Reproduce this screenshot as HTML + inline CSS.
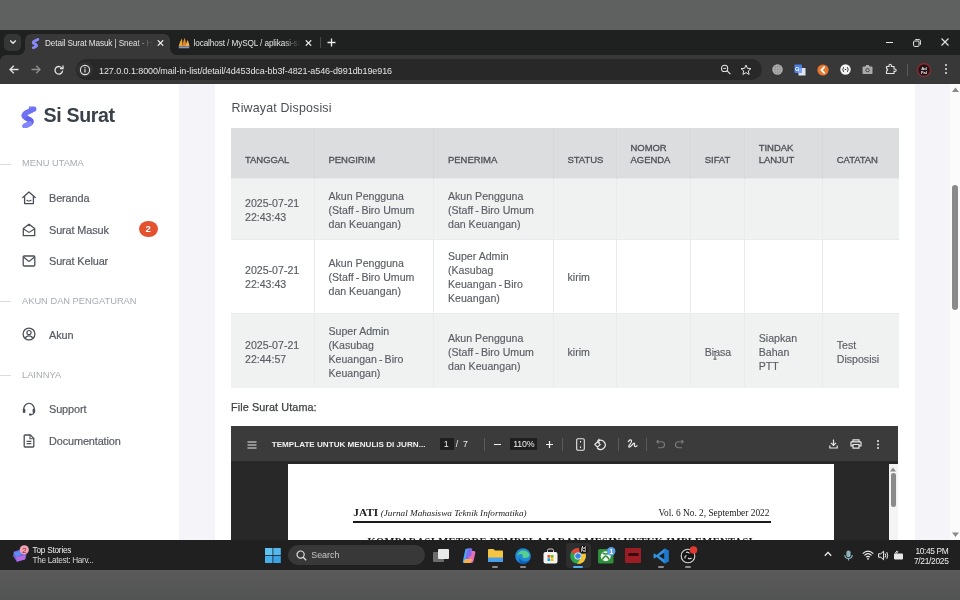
<!DOCTYPE html>
<html><head><meta charset="utf-8">
<style>
*{box-sizing:border-box;margin:0;padding:0}
html,body{width:960px;height:600px;overflow:hidden;background:#5f6060;font-family:"Liberation Sans",sans-serif}
body{will-change:transform}
.abs{position:absolute}
#topgray{left:0;top:0;width:960px;height:30px;background:#5f6060}
#tabstrip{left:0;top:30px;width:960px;height:25px;background:#1f2020}
#toolbar{left:0;top:55px;width:960px;height:29px;background:#383838}
#page{left:0;top:84px;width:960px;height:456px;background:#f5f5f9;overflow:hidden}
#taskbar{left:0;top:540px;width:960px;height:29.5px;background:#202020}
#botgray{left:0;top:569.5px;width:960px;height:30.5px;background:linear-gradient(#5a5b5a,#525453)}
#sidebar{left:0;top:0;width:179px;height:456px;background:#fff}
#card{left:214.5px;top:-20px;width:700.5px;height:500px;background:#fff}
.menuhdr{position:absolute;left:22px;font-size:9.3px;color:#a7acb2}
.menuline{position:absolute;left:0;width:11px;height:1px;background:#d9dbde}
.mi{position:absolute;left:49px;font-size:10.9px;letter-spacing:-.12px;color:#575c63;-webkit-text-stroke:.2px #575c63}
.ic{position:absolute;left:22px}
table{border-collapse:collapse;position:absolute;left:16.5px;top:64px;width:667.5px;table-layout:fixed}
th{background:#dcdddf;font-size:9.5px;color:#4d5157;text-align:left;font-weight:normal;letter-spacing:-.05px;-webkit-text-stroke:.3px #4d5157;padding:0 0 12.5px 14px;height:50.5px;line-height:12px;vertical-align:bottom;border-right:1px solid #d6d8da}
td{font-size:10.6px;color:#5a5e64;-webkit-text-stroke:.15px #5a5e64;line-height:14px;padding:1.5px 0 0 14px;border-right:1px solid #eaebec;border-top:1px solid #e9eaeb}
tr.odd td{background:#f0f1f1}
.tabt{font-size:8.2px;letter-spacing:-.1px;color:#e3e3e3;white-space:nowrap;overflow:hidden;-webkit-mask-image:linear-gradient(90deg,#000 85%,transparent)}
th:last-child,td:last-child{border-right:none}
</style></head><body>
<div id="topgray" class="abs"></div>
<div id="tabstrip" class="abs">
  <div class="abs" style="left:4px;top:4px;width:17px;height:17px;border-radius:5px;background:#353636"></div>
  <svg class="abs" style="left:9px;top:9px" width="8" height="6" viewBox="0 0 8 6"><path d="M1.2 1.5 L4 4.3 L6.8 1.5" stroke="#e8e8e8" stroke-width="1.4" fill="none"/></svg>
  <div class="abs" style="left:25px;top:4.2px;width:144.8px;height:22px;border-radius:6px 6px 0 0;background:#383838"></div>
  <div class="abs" style="left:19px;top:19px;width:6px;height:6px;background:radial-gradient(circle at 0 0,transparent 5.5px,#383838 6px)"></div>
  <div class="abs" style="left:169.8px;top:19px;width:6px;height:6px;background:radial-gradient(circle at 100% 0,transparent 5.5px,#383838 6px)"></div>
  <svg class="abs" style="left:31px;top:7.5px" width="9" height="11" viewBox="0 0 9 11"><path d="M6.8 1.4 L3.4 3.2 Q1.2 4.6 3 5.6 L5 6.6 Q6.5 7.6 4.8 8.6 L2.4 9.8" stroke="#8688f6" stroke-width="2.8" fill="none" stroke-linecap="round" stroke-linejoin="round"/></svg>
  <div class="abs tabt" style="left:45px;top:8.5px;width:107px">Detail Surat Masuk | Sneat - HTML</div>
  <svg class="abs" style="left:156.5px;top:9.8px" width="7" height="6" viewBox="0 0 7 6"><path d="M0.8 0.3 L6.2 5.7 M6.2 0.3 L0.8 5.7" stroke="#ececec" stroke-width="1.2"/></svg>
  <svg class="abs" style="left:177.5px;top:6.5px" width="12" height="12" viewBox="0 0 12 12"><path d="M0.8 9 Q2 4 4 1.5 L4.6 9 Z" fill="#f0a53a"/><path d="M4.2 9 Q5.2 3.5 6.8 0.8 Q7.8 4 8.2 9 Z" fill="#e08a2a"/><path d="M7.6 9 Q8.6 5 9.6 3 Q11 6 11.4 9 Z" fill="#f3b556"/><path d="M0.5 9.2 H11.6 L11 11.2 H1 Z" fill="#8f97b0"/></svg>
  <div class="abs tabt" style="left:193.5px;top:8.5px;width:106px">localhost / MySQL / aplikasi-surat</div>
  <svg class="abs" style="left:305px;top:9.8px" width="7" height="6" viewBox="0 0 7 6"><path d="M0.8 0.3 L6.2 5.7 M6.2 0.3 L0.8 5.7" stroke="#ececec" stroke-width="1.2"/></svg>
  <div class="abs" style="left:320px;top:7px;width:1px;height:11px;background:#4a4a4a"></div>
  <svg class="abs" style="left:327px;top:8px" width="9" height="9" viewBox="0 0 9 9"><path d="M4.5 0.5 V8.5 M0.5 4.5 H8.5" stroke="#ececec" stroke-width="1.3"/></svg>
  <div class="abs" style="left:885.5px;top:12px;width:7.5px;height:1px;background:#e6e6e6"></div>
  <svg class="abs" style="left:912.5px;top:8.5px" width="8" height="8" viewBox="0 0 8 8"><rect x="0.6" y="2" width="5.4" height="5.4" rx="1" stroke="#e6e6e6" stroke-width="1" fill="none"/><path d="M2.2 0.6 H6.2 Q7.4 0.6 7.4 1.8 V5.8" stroke="#e6e6e6" stroke-width="1" fill="none"/></svg>
  <svg class="abs" style="left:941px;top:8px" width="8" height="8" viewBox="0 0 8 8"><path d="M0.5 0.5 L7.5 7.5 M7.5 0.5 L0.5 7.5" stroke="#e6e6e6" stroke-width="1.1"/></svg>
</div>
<div id="toolbar" class="abs">
  <div class="abs" style="left:0;top:0;width:6px;height:6px;background:radial-gradient(circle at 100% 100%,transparent 5.5px,#1f2020 6px)"></div>
  <svg class="abs" style="left:9px;top:10px" width="10" height="9" viewBox="0 0 10 9"><path d="M9.5 4.5 H1 M4.8 0.7 L1 4.5 L4.8 8.3" stroke="#e3e3e3" stroke-width="1.3" fill="none"/></svg>
  <svg class="abs" style="left:31px;top:10px" width="10" height="9" viewBox="0 0 10 9"><path d="M0.5 4.5 H9 M5.2 0.7 L9 4.5 L5.2 8.3" stroke="#8f8f8f" stroke-width="1.3" fill="none"/></svg>
  <svg class="abs" style="left:54px;top:9.5px" width="10" height="10" viewBox="0 0 10 10"><path d="M8.3 3.8 A3.8 3.8 0 1 0 8.6 5.6" stroke="#e3e3e3" stroke-width="1.3" fill="none"/><path d="M6 3.6 H9 V0.6" stroke="#e3e3e3" stroke-width="1.3" fill="none"/></svg>
  <div class="abs" style="left:75.5px;top:4px;width:686px;height:21px;border-radius:10.5px;background:#282828"></div>
  <div class="abs" style="left:77px;top:6.5px;width:15.5px;height:15.5px;border-radius:50%;background:#323232"></div>
  <svg class="abs" style="left:79px;top:8.5px" width="12" height="12" viewBox="0 0 12 12"><circle cx="6" cy="6" r="4.6" stroke="#e3e3e3" stroke-width="1.1" fill="none"/><path d="M6 5.2 V8.6" stroke="#e3e3e3" stroke-width="1.2"/><circle cx="6" cy="3.7" r="0.7" fill="#e3e3e3"/></svg>
  <div class="abs" id="url" style="left:99px;top:10.5px;font-size:9px;letter-spacing:-.08px;color:#e3e3e3;white-space:nowrap">127.0.0.1:8000/mail-in-list/detail/4d453dca-bb3f-4821-a546-d991db19e916</div>
  <svg class="abs" style="left:720px;top:8.5px" width="12" height="12" viewBox="0 0 12 12"><circle cx="4.6" cy="4.4" r="3.1" stroke="#e3e3e3" stroke-width="1.1" fill="none"/><path d="M6.9 6.7 L10.4 10.2" stroke="#e3e3e3" stroke-width="1.2"/><path d="M3.2 4.4 H6" stroke="#e3e3e3" stroke-width="1"/></svg>
  <svg class="abs" style="left:740px;top:8.5px" width="12" height="12" viewBox="0 0 12 12"><path d="M6 1 L7.4 4.3 L11 4.6 L8.3 6.9 L9.1 10.5 L6 8.6 L2.9 10.5 L3.7 6.9 L1 4.6 L4.6 4.3 Z" stroke="#e3e3e3" stroke-width="1" fill="none" stroke-linejoin="round"/></svg>
  <svg class="abs" style="left:772px;top:9px" width="11" height="11" viewBox="0 0 11 11"><circle cx="5.5" cy="5.5" r="5.2" fill="#b4b4b4"/><path d="M0.6 5.5 H10.4 M1.4 3 H9.6 M1.4 8 H9.6 M5.5 0.3 V10.7" stroke="#8c8c8c" stroke-width=".6"/><ellipse cx="5.5" cy="5.5" rx="2.4" ry="5.2" stroke="#8c8c8c" stroke-width=".6" fill="none"/></svg>
  <svg class="abs" style="left:794px;top:8.5px" width="12" height="12" viewBox="0 0 12 12"><rect x="0.5" y="0.5" width="7.5" height="8.5" rx="0.8" fill="#4a7fe6"/><path d="M4.5 4 H11.5 V11.5 H4.5 Z" fill="#dfe6f3"/><path d="M4.5 4 H8 V9 H4.5 Z" fill="#7ea3ee"/><text x="3.2" y="6.6" font-size="5.5" font-weight="bold" fill="#fff" font-family="Liberation Sans" text-anchor="middle">G</text></svg>
  <svg class="abs" style="left:817px;top:8.5px" width="12" height="12" viewBox="0 0 12 12"><circle cx="6" cy="6" r="5.6" fill="#e8772e"/><path d="M7.2 3.2 L4.4 6 L7.2 8.8" stroke="#fff" stroke-width="1.8" fill="none" stroke-linecap="round"/></svg>
  <svg class="abs" style="left:840px;top:9px" width="11" height="11" viewBox="0 0 11 11"><circle cx="5.5" cy="5.5" r="5.2" fill="#f4f4f4"/><path d="M3.6 3.2 Q2 5.5 3.6 7.8 M7.4 3.2 Q9 5.5 7.4 7.8" stroke="#333" stroke-width="1" fill="none"/><path d="M4.8 5.5 H6.2" stroke="#333" stroke-width="1"/></svg>
  <svg class="abs" style="left:862px;top:9px" width="11" height="11" viewBox="0 0 11 11"><path d="M0.5 3.5 Q0.5 2.5 1.5 2.5 H3.2 L4.2 1 H6.8 L7.8 2.5 H9.5 Q10.5 2.5 10.5 3.5 V9.2 Q10.5 10 9.5 10 H1.5 Q0.5 10 0.5 9.2 Z" fill="#aaaaaa"/><circle cx="5.5" cy="6.2" r="2" fill="#383838"/><circle cx="5.5" cy="6.2" r="1.2" fill="#aaaaaa"/></svg>
  <svg class="abs" style="left:885px;top:8px" width="12" height="12" viewBox="0 0 12 12"><path d="M1.5 3.5 H4 V2.5 A1.2 1.2 0 0 1 6.4 2.5 V3.5 H9 V6 H10 A1.2 1.2 0 0 1 10 8.4 H9 V10.5 H1.5 V8 A1.2 1.2 0 0 0 1.5 5.6 Z" stroke="#e3e3e3" stroke-width="1.1" fill="none"/></svg>
  <div class="abs" style="left:906.5px;top:8.5px;width:1px;height:12px;background:#5a5a5a"></div>
  <svg class="abs" style="left:917px;top:7.5px" width="14" height="14" viewBox="0 0 14 14"><circle cx="7" cy="7" r="6.4" fill="#241416" stroke="#a02a33" stroke-width="1.1"/><text x="7" y="6.6" font-size="4.2" font-weight="bold" fill="#f0f0f0" font-family="Liberation Sans" text-anchor="middle">Ad</text><text x="7" y="10.6" font-size="4.2" font-weight="bold" fill="#f0f0f0" font-family="Liberation Sans" text-anchor="middle">Fal</text></svg>
  <div class="abs" style="left:945px;top:9px;width:2.2px;height:2.2px;border-radius:50%;background:#e3e3e3;box-shadow:0 4px 0 #e3e3e3,0 8px 0 #e3e3e3"></div>
</div>
<div id="page" class="abs">
  <div id="sidebar" class="abs">
    <svg class="abs" style="left:21px;top:21px" width="17" height="23" viewBox="0 0 17 23"><path d="M8.2 1.2 L15.2 2 L11.6 7.6 L7 9.2 Z" fill="#8385fb"/><path d="M12.8 4.2 L5.6 7.6 Q0.8 10.2 4.6 12.6 L8.8 14.8 Q11.6 16.6 8.6 18.6 L4 21" stroke="#7072f6" stroke-width="5.2" fill="none" stroke-linecap="round" stroke-linejoin="round"/><path d="M4.6 12.6 L8.8 14.8 Q11.6 16.6 8.6 18.6" stroke="#6063ec" stroke-width="5" fill="none"/><path d="M8.6 18.6 L4 21" stroke="#8385fb" stroke-width="5" fill="none" stroke-linecap="round"/></svg>
    <div class="abs" style="left:43.5px;top:19.5px;font-size:19.6px;font-weight:bold;color:#3a4049;letter-spacing:-.35px">Si Surat</div>
    <div class="menuline" style="top:79.5px"></div><div class="menuhdr" style="top:74px">MENU UTAMA</div>
    <svg class="ic" style="top:107px" width="14" height="14" viewBox="0 0 14 14"><path d="M0.8 6.6 L7 1 L13.2 6.6" stroke="#4b5058" stroke-width="1.3" fill="none" stroke-linejoin="round" stroke-linecap="round"/><path d="M2.6 5.2 V12.6 H11.4 V5.2" stroke="#4b5058" stroke-width="1.3" fill="none" stroke-linejoin="round"/><path d="M4.6 9 Q7 11 9.4 9" stroke="#4b5058" stroke-width="1.2" fill="none"/></svg>
    <div class="mi" style="top:108px">Beranda</div>
    <svg class="ic" style="top:138.5px" width="14" height="14" viewBox="0 0 14 14"><path d="M1.3 5.6 L7 1.2 L12.7 5.6 V12.7 H1.3 Z" stroke="#4b5058" stroke-width="1.3" fill="none" stroke-linejoin="round"/><path d="M1.6 5.9 L7 9.4 L12.4 5.9" stroke="#4b5058" stroke-width="1.2" fill="none"/></svg>
    <div class="mi" style="top:140px">Surat Masuk</div>
    <div class="abs" style="left:138.75px;top:137px;width:18.75px;height:16.25px;border-radius:50%;background:#e4512e;color:#fff;font-size:9.5px;font-weight:bold;text-align:center;line-height:16.5px">2</div>
    <svg class="ic" style="top:170.5px" width="14" height="12" viewBox="0 0 14 12"><rect x="1.2" y="1" width="11.6" height="10" rx="1" stroke="#4b5058" stroke-width="1.3" fill="none"/><path d="M1.8 2.2 L7 6.4 L12.2 2.2" stroke="#4b5058" stroke-width="1.2" fill="none"/></svg>
    <div class="mi" style="top:170.5px">Surat Keluar</div>
    <div class="menuline" style="top:217px"></div><div class="menuhdr" style="top:211.5px">AKUN DAN PENGATURAN</div>
    <svg class="ic" style="top:243px" width="14" height="14" viewBox="0 0 14 14"><circle cx="7" cy="7" r="5.9" stroke="#4b5058" stroke-width="1.3" fill="none"/><circle cx="7" cy="5.6" r="2.1" stroke="#4b5058" stroke-width="1.2" fill="none"/><path d="M3.4 11.3 Q4 8.9 7 8.9 Q10 8.9 10.6 11.3" stroke="#4b5058" stroke-width="1.2" fill="none"/></svg>
    <div class="mi" style="top:245px">Akun</div>
    <div class="menuline" style="top:291px"></div><div class="menuhdr" style="top:285.5px">LAINNYA</div>
    <svg class="ic" style="top:318px" width="14" height="14" viewBox="0 0 14 14"><path d="M1.8 8.4 V6.6 A5.2 5.2 0 0 1 12.2 6.6 V8.4" stroke="#4b5058" stroke-width="1.3" fill="none"/><rect x="0.8" y="6.8" width="2.6" height="4.2" rx="1" fill="#4b5058"/><rect x="10.6" y="6.8" width="2.6" height="4.2" rx="1" fill="#4b5058"/><path d="M12 10.6 Q11.6 12.6 8.6 12.6" stroke="#4b5058" stroke-width="1.2" fill="none"/><rect x="7" y="11.6" width="2.4" height="1.9" rx=".6" fill="#4b5058"/></svg>
    <div class="mi" style="top:319px">Support</div>
    <svg class="ic" style="top:349.5px;left:23px" width="12" height="14" viewBox="0 0 12 14"><path d="M1.2 1.8 Q1.2 1 2 1 H7.4 L10.8 4.4 V12.2 Q10.8 13 10 13 H2 Q1.2 13 1.2 12.2 Z" stroke="#4b5058" stroke-width="1.3" fill="none" stroke-linejoin="round"/><path d="M7 1.2 V4.8 H10.6 M3.6 7.4 H8.4 M3.6 9.6 H8.4" stroke="#4b5058" stroke-width="1.1" fill="none"/></svg>
    <div class="mi" style="top:350.5px">Documentation</div>
  </div>
  <div class="abs" style="left:950px;top:0;width:10px;height:456px;background:#fbfbfb"></div>
  <svg class="abs" style="left:952px;top:3px" width="7" height="6" viewBox="0 0 7 6"><path d="M0 5 L3.5 0.5 L7 5 Z" fill="#8a8a8a"/></svg>
  <div class="abs" style="left:952px;top:100.5px;width:6px;height:125.5px;border-radius:3px;background:#8a8a8a"></div>
  <svg class="abs" style="left:952px;top:448px" width="7" height="6" viewBox="0 0 7 6"><path d="M0 0.5 L3.5 5 L7 0.5 Z" fill="#8a8a8a"/></svg>
  <div id="card" class="abs">
    <div class="abs" style="left:17px;top:37px;font-size:12.4px;color:#4a4e54;letter-spacing:.18px">Riwayat Disposisi</div>
    <table>
      <colgroup><col style="width:83px"><col style="width:119.5px"><col style="width:119.5px"><col style="width:63px"><col style="width:74.25px"><col style="width:54px"><col style="width:78px"><col></colgroup>
      <tr><th>TANGGAL</th><th>PENGIRIM</th><th>PENERIMA</th><th>STATUS</th><th>NOMOR<br>AGENDA</th><th>SIFAT</th><th>TINDAK<br>LANJUT</th><th>CATATAN</th></tr>
      <tr class="odd" style="height:60.75px"><td>2025-07-21<br>22:43:43</td><td>Akun Pengguna<br>(Staff&#8201;-&#8201;Biro Umum<br>dan Keuangan)</td><td>Akun Pengguna<br>(Staff&#8201;-&#8201;Biro Umum<br>dan Keuangan)</td><td></td><td></td><td></td><td></td><td></td></tr>
      <tr style="height:74.5px"><td>2025-07-21<br>22:43:43</td><td>Akun Pengguna<br>(Staff&#8201;-&#8201;Biro Umum<br>dan Keuangan)</td><td>Super Admin<br>(Kasubag<br>Keuangan&#8201;-&#8201;Biro<br>Keuangan)</td><td>kirim</td><td></td><td></td><td></td><td></td></tr>
      <tr class="odd" style="height:74.5px"><td>2025-07-21<br>22:44:57</td><td>Super Admin<br>(Kasubag<br>Keuangan&#8201;-&#8201;Biro<br>Keuangan)</td><td>Akun Pengguna<br>(Staff&#8201;-&#8201;Biro Umum<br>dan Keuangan)</td><td>kirim</td><td></td><td>Biasa</td><td>Siapkan<br>Bahan<br>PTT</td><td>Test<br>Disposisi</td></tr>
    </table>
    <div class="abs" style="left:16.5px;top:337px;font-size:10.8px;color:#3f4348;font-weight:normal;letter-spacing:.1px;-webkit-text-stroke:.25px #3f4348">File Surat Utama:</div>
    <div id="pdf" class="abs" style="left:16.75px;top:362.25px;width:666.75px;height:200px;background:#282828">
      <div class="abs" style="left:0;top:0;width:666.75px;height:35px;background:#3b3b3b"></div>
      <svg class="abs" style="left:15.75px;top:15px" width="10" height="8" viewBox="0 0 10 8"><path d="M0.5 1 H9.5 M0.5 4 H9.5 M0.5 7 H9.5" stroke="#e8e8e8" stroke-width="1.1"/></svg>
      <div class="abs" style="left:40.5px;top:12.5px;font-size:8.1px;font-weight:bold;color:#f0f0f0;white-space:nowrap;line-height:11px">TEMPLATE UNTUK MENULIS DI JURN...</div>
      <div class="abs" style="left:208.75px;top:11.25px;width:13.75px;height:12.5px;background:#1e1e1e"></div>
      <div class="abs" style="left:212.5px;top:12.5px;font-size:8.8px;color:#f0f0f0;line-height:11px">1</div>
      <div class="abs" style="left:224.5px;top:12.5px;font-size:8.8px;color:#f0f0f0;line-height:11px">/&nbsp; 7</div>
      <div class="abs" style="left:253px;top:11.75px;width:1px;height:13px;background:#5a5a5a"></div>
      <div class="abs" style="left:262.5px;top:17.75px;width:6.75px;height:1.2px;background:#f0f0f0"></div>
      <div class="abs" style="left:278.25px;top:11.25px;width:27.5px;height:12.5px;background:#1e1e1e"></div>
      <div class="abs" style="left:282px;top:12.5px;font-size:8.8px;color:#f0f0f0;line-height:11px;letter-spacing:-.2px">110%</div>
      <svg class="abs" style="left:314.5px;top:14.5px" width="7" height="7" viewBox="0 0 7 7"><path d="M3.5 0 V7 M0 3.5 H7" stroke="#f0f0f0" stroke-width="1.2"/></svg>
      <div class="abs" style="left:331px;top:11.75px;width:1px;height:13px;background:#5a5a5a"></div>
      <svg class="abs" style="left:344.5px;top:11.75px" width="9" height="13" viewBox="0 0 9 13"><rect x="0.7" y="0.7" width="7.6" height="11.6" rx="1.2" stroke="#e8e8e8" stroke-width="1.1" fill="none"/><path d="M4.5 3 V4.6 M4.5 8.4 V10" stroke="#e8e8e8" stroke-width="1.1"/></svg>
      <svg class="abs" style="left:362.5px;top:11.75px" width="13" height="13" viewBox="0 0 13 13"><path d="M4.5 2.8 A4.6 4.6 0 1 1 3.2 10" stroke="#e8e8e8" stroke-width="1.2" fill="none"/><path d="M5.5 0.8 L3.8 2.8 L5.8 4.6" stroke="#e8e8e8" stroke-width="1.1" fill="none"/><path d="M0.8 6.5 L3.5 3.8 L6.2 6.5 L3.5 9.2 Z" stroke="#e8e8e8" stroke-width="1.1" fill="none"/></svg>
      <div class="abs" style="left:386.75px;top:11.75px;width:1px;height:13px;background:#5a5a5a"></div>
      <svg class="abs" style="left:395.5px;top:12px" width="11" height="12" viewBox="0 0 11 12"><path d="M1 4 Q3.5 0.5 4.5 2.5 Q5 4 2 7.5 Q1 9.5 3 9 L6.5 5.5 Q8 4.5 7.5 7 Q7 9 9 8.5 L10.5 7.5" stroke="#e8e8e8" stroke-width="1.2" fill="none"/></svg>
      <div class="abs" style="left:415px;top:11.75px;width:1px;height:13px;background:#5a5a5a"></div>
      <svg class="abs" style="left:424.5px;top:13px" width="9" height="10" viewBox="0 0 9 10"><path d="M2.5 1 L0.8 2.8 L2.5 4.6 M1 2.8 H5.5 A3 3 0 0 1 5.5 8.8 H2" stroke="#7a7a7a" stroke-width="1.1" fill="none"/></svg>
      <svg class="abs" style="left:443.75px;top:13px" width="9" height="10" viewBox="0 0 9 10"><path d="M6.5 1 L8.2 2.8 L6.5 4.6 M8 2.8 H3.5 A3 3 0 0 0 3.5 8.8 H7" stroke="#7a7a7a" stroke-width="1.1" fill="none"/></svg>
      <svg class="abs" style="left:597.5px;top:13px" width="9" height="10" viewBox="0 0 9 10"><path d="M4.5 0.5 V6 M2 3.8 L4.5 6.3 L7 3.8 M0.8 6.5 V9 H8.2 V6.5" stroke="#e8e8e8" stroke-width="1.2" fill="none"/></svg>
      <svg class="abs" style="left:618.75px;top:13px" width="12" height="10" viewBox="0 0 12 10"><path d="M3 3 V0.8 H9 V3 M3 6.8 H1 V3.4 Q1 2.8 1.6 2.8 H10.4 Q11 2.8 11 3.4 V6.8 H9 M3 5.5 H9 V9.2 H3 Z" stroke="#e8e8e8" stroke-width="1.2" fill="none"/></svg>
      <div class="abs" style="left:645.75px;top:13.5px;width:2px;height:2px;border-radius:50%;background:#e8e8e8;box-shadow:0 3.5px 0 #e8e8e8,0 7px 0 #e8e8e8"></div>
      <div class="abs" style="left:56.25px;top:37.5px;width:546.25px;height:200px;background:#fff">
        <div class="abs" style="left:65.75px;top:40px;font-family:'Liberation Serif',serif;color:#1a1a1a;white-space:nowrap;line-height:14px"><b style="font-size:11.3px">JATI</b><i style="margin-left:2.5px"></i><i style="font-size:9.2px">(Jurnal Mahasiswa Teknik Informatika)</i></div>
        <div class="abs" style="left:371px;top:42px;font-family:'Liberation Serif',serif;color:#1a1a1a;white-space:nowrap;font-size:9.35px;line-height:14px">Vol. 6 No. 2, September 2022</div>
        <div class="abs" style="left:65.75px;top:57.5px;width:418px;height:1.3px;background:#1a1a1a"></div>
        <div class="abs" style="left:80px;top:71.5px;font-family:'Liberation Serif',serif;color:#1a1a1a;white-space:nowrap;font-size:10.5px;font-weight:bold;line-height:14px;letter-spacing:.35px">KOMPARASI METODE PEMBELAJARAN MESIN UNTUK IMPLEMENTASI</div>
      </div>
      <div class="abs" style="left:657.25px;top:37.5px;width:9.5px;height:200px;background:#f4f4f4"></div>
      <svg class="abs" style="left:659px;top:40.5px" width="6" height="5" viewBox="0 0 6 5"><path d="M0 4.5 L3 0.5 L6 4.5 Z" fill="#8a8a8a"/></svg>
      <div class="abs" style="left:659.75px;top:47px;width:4.5px;height:34px;border-radius:2.25px;background:#8a8a8a"></div>
    </div>
  </div>
  </div>
</div>
<svg class="abs" style="left:712px;top:350px" width="6" height="11" viewBox="0 0 6 11"><path d="M1.2 1.2 H4.8 M3 1.2 V9.4 M1.2 9.4 H4.8" stroke="#fff" stroke-width="2.2" opacity=".8"/><path d="M1.4 1.4 H4.6 M3 1.4 V9.2 M1.4 9.2 H4.6" stroke="#505050" stroke-width="1"/></svg>
<div id="taskbar" class="abs">
  <svg class="abs" style="left:12px;top:4.5px" width="17" height="18" viewBox="0 0 17 18"><path d="M2 6.5 L10 4 L14.5 9.5 L13.5 14 L5 17 L1 11 Z" fill="#7a5ad8"/><path d="M1.5 7.5 L9 5.5 L11 9 L4 12 Z" fill="#5b8ef0"/><path d="M4 12 L13.5 10 L13 14.5 L5 16.5 Z" fill="#b36be0"/><circle cx="12.3" cy="4.8" r="4.6" fill="#f2a3b3"/><text x="12.3" y="7.6" font-size="7.5" text-anchor="middle" fill="#7a2030" font-family="Liberation Sans">2</text></svg>
  <div class="abs" style="left:32.5px;top:5.5px;font-size:8.2px;letter-spacing:-.2px;color:#f0f0f0;line-height:10px;white-space:nowrap">Top Stories</div>
  <div class="abs" style="left:32.5px;top:15.5px;font-size:8.2px;letter-spacing:-.3px;color:#d8d8d8;line-height:10px;white-space:nowrap">The Latest: Harv...</div>
  <svg class="abs" style="left:264.5px;top:8px" width="16" height="15" viewBox="0 0 16 15"><rect x="0" y="0" width="7.5" height="7" fill="#5fc4f4"/><rect x="8.3" y="0" width="7.5" height="7" fill="#52b8ee"/><rect x="0" y="7.8" width="7.5" height="7.2" fill="#46aeea"/><rect x="8.3" y="7.8" width="7.5" height="7.2" fill="#3aa2e4"/></svg>
  <div class="abs" style="left:288px;top:5px;width:137px;height:20px;border-radius:10px;background:#383838"></div>
  <svg class="abs" style="left:295.5px;top:9.5px" width="11" height="11" viewBox="0 0 11 11"><circle cx="4.6" cy="4.6" r="3.6" stroke="#e0e0e0" stroke-width="1.2" fill="none"/><path d="M7.2 7.2 L10.2 10.2" stroke="#e0e0e0" stroke-width="1.3"/></svg>
  <div class="abs" style="left:311.25px;top:10px;font-size:8.9px;color:#cacaca;line-height:11px">Search</div>
  <div class="abs" style="left:432.5px;top:12px;width:11px;height:10px;background:#6b6b6b;border-radius:1px"></div>
  <div class="abs" style="left:437.5px;top:8.5px;width:11px;height:10px;background:#e8e8e8;border-radius:1px"></div>
  <svg class="abs" style="left:459.5px;top:7.5px" width="17" height="16" viewBox="0 0 17 16"><path d="M5.5 1 Q6.5 0.3 8 0.5 H11 Q12.5 0.5 12.2 2 L10 12 Q9.5 14.5 7 15 H4 Q2.5 15 2.8 13.5 L5 3 Z" fill="#4aa8f0"/><path d="M8 0.5 H11 Q12.5 0.5 12.2 2 L10.5 9 Q10 11 8 11 H5.5 L7 3 Q7.3 0.8 8 0.5 Z" fill="#7e6cf2"/><path d="M11.5 3 H14 Q15.8 3 15.3 5 L13.5 13 Q13 15 11 15 H7 L8.5 10 Q9 8 11 8 Z" fill="#e86fb8"/><path d="M4 15 H9 Q11 15 11.5 13 L12 11 H6.5 Q4.5 11 4 13 Z" fill="#f6b24a"/></svg>
  <svg class="abs" style="left:488px;top:8px" width="15" height="15" viewBox="0 0 15 15"><path d="M0 2 Q0 1 1 1 H5.5 L7 2.5 H14 Q15 2.5 15 3.5 V13 Q15 14 14 14 H1 Q0 14 0 13 Z" fill="#f5c542"/><rect x="0" y="9.5" width="15" height="4.5" fill="#4a9de8"/></svg>
  <div class="abs" style="left:491.5px;top:26px;width:6px;height:1.5px;border-radius:1px;background:#8a8a8a"></div>
  <svg class="abs" style="left:515px;top:7.5px" width="16" height="16" viewBox="0 0 16 16"><circle cx="8" cy="8" r="7.8" fill="#1f8ad8"/><path d="M2 9 Q2.5 3 8 2.5 Q13.5 2.5 14.5 7 Q14 10 10 10 Q7 10 7.5 8 Q8.5 6 5 6 Q2.5 6.5 2 9 Z" fill="#56d08a"/><path d="M6 15.5 Q3 13 4.5 10 Q6 13 10 13.5 Q13 13.5 15 11 Q13 15.5 8 15.8 Z" fill="#0e5fb8"/></svg>
  <div class="abs" style="left:519.5px;top:26px;width:6px;height:1.5px;border-radius:1px;background:#8a8a8a"></div>
  <svg class="abs" style="left:543px;top:7.5px" width="15" height="16" viewBox="0 0 15 16"><path d="M4.5 4 V2.5 Q4.5 1 6 1 H9 Q10.5 1 10.5 2.5 V4" stroke="#d0d0d0" stroke-width="1" fill="none"/><rect x="0.5" y="4" width="14" height="11.5" rx="2" fill="#f4f4f4"/><rect x="4.5" y="7" width="2.7" height="2.7" fill="#f25022"/><rect x="7.8" y="7" width="2.7" height="2.7" fill="#7fba00"/><rect x="4.5" y="10.3" width="2.7" height="2.7" fill="#00a4ef"/><rect x="7.8" y="10.3" width="2.7" height="2.7" fill="#ffb900"/></svg>
  <div class="abs" style="left:565.5px;top:2.5px;width:25px;height:25px;border-radius:4px;background:#2e2e2e"></div>
  <svg class="abs" style="left:570px;top:7.5px" width="16" height="16" viewBox="0 0 16 16"><circle cx="8" cy="8" r="7.8" fill="#2fa34f"/><path d="M8 0.2 A7.8 7.8 0 0 1 14.9 4.2 L8 4.2 Z" fill="#e5443a"/><path d="M1.1 4.2 A7.8 7.8 0 0 1 8 0.2 L14.9 4.2 L8 4.2 A3.8 3.8 0 0 0 4.7 6 L1.1 4.2 Z" fill="#e5443a"/><path d="M14.9 4.2 A7.8 7.8 0 0 1 7 15.7 L11.3 9.8 A3.8 3.8 0 0 0 11.3 6 Z" fill="#f8c53a"/><circle cx="8" cy="8" r="3.6" fill="#fff"/><circle cx="8" cy="8" r="2.8" fill="#3f7fe6"/></svg>
  <svg class="abs" style="left:578.5px;top:5px" width="9" height="9" viewBox="0 0 9 9"><circle cx="4.5" cy="4.5" r="4.3" fill="#1a1414"/><text x="4.5" y="4.2" font-size="3.4" font-weight="bold" fill="#eee" font-family="Liberation Sans" text-anchor="middle">Ad</text><text x="4.5" y="7.4" font-size="3.4" font-weight="bold" fill="#eee" font-family="Liberation Sans" text-anchor="middle">Fal</text></svg>
  <div class="abs" style="left:573px;top:25.5px;width:9.5px;height:2px;border-radius:1px;background:#4fb0f0"></div>
  <svg class="abs" style="left:597.5px;top:7px" width="18" height="17" viewBox="0 0 18 17"><rect x="0" y="2" width="15.5" height="14.5" rx="1.5" fill="#2f8f3a"/><circle cx="7.75" cy="9.25" r="5" fill="#f2f2f2"/><path d="M4.6 5.8 Q7.75 8 10.9 5.8 M4.2 12.6 Q6 9.5 7.75 9 Q9.5 9.5 11.3 12.6" stroke="#2f8f3a" stroke-width="1.5" fill="none"/><circle cx="13.2" cy="4.3" r="4.2" fill="#5aa0e6"/><text x="13.2" y="6.8" font-size="6.5" font-weight="bold" text-anchor="middle" fill="#fff" font-family="Liberation Sans">1</text></svg>
  <div class="abs" style="left:625px;top:8px;width:16px;height:15px;border-radius:1px;background:#9c1d24"></div>
  <div class="abs" style="left:627.5px;top:13px;width:11px;height:3px;border-radius:2px;background:#3b0c0e"></div>
  <svg class="abs" style="left:652.5px;top:7.5px" width="16" height="16" viewBox="0 0 16 16"><path d="M11.5 0.5 L15.5 2.5 V13.5 L11.5 15.5 L3.5 9 L1.5 10.5 L0.5 10 V6 L1.5 5.5 L3.5 7 Z" fill="#2f8fe0"/><path d="M11.5 4.5 L6 8 L11.5 11.5 Z" fill="#1c1c1c"/><path d="M11.5 0.5 L15.5 2.5 V13.5 L11.5 15.5 Z" fill="#1e78d0"/></svg>
  <div class="abs" style="left:657.5px;top:26px;width:6px;height:1.5px;border-radius:1px;background:#8a8a8a"></div>
  <svg class="abs" style="left:680px;top:6px" width="18" height="18" viewBox="0 0 18 18"><circle cx="8" cy="10" r="6.8" fill="#151515" stroke="#d8d8d8" stroke-width="1.1"/><path d="M6 6.5 Q8 5.5 9.5 7.5 M5 12.5 Q4.5 10 6.5 9.5 M11.5 12 Q9.5 13.5 8 12" stroke="#d8d8d8" stroke-width="1.1" fill="none"/><circle cx="13.5" cy="4" r="3.8" fill="#e03a30"/></svg>
  <div class="abs" style="left:685px;top:26px;width:6px;height:1.5px;border-radius:1px;background:#8a8a8a"></div>
  <svg class="abs" style="left:824px;top:11px" width="8" height="6" viewBox="0 0 8 6"><path d="M0.8 4.8 L4 1.4 L7.2 4.8" stroke="#f0f0f0" stroke-width="1.3" fill="none"/></svg>
  <svg class="abs" style="left:843.5px;top:9.5px" width="9" height="11" viewBox="0 0 9 11"><rect x="2.4" y="0.5" width="4.2" height="6.8" rx="2.1" fill="#8fb3bd"/><path d="M0.8 5 Q0.8 8.5 4.5 8.5 Q8.2 8.5 8.2 5 M4.5 8.5 V10.5" stroke="#8fb3bd" stroke-width="1.1" fill="none"/></svg>
  <svg class="abs" style="left:862px;top:10px" width="12" height="10" viewBox="0 0 12 10"><path d="M0.7 3.6 Q6 -1.4 11.3 3.6 M2.4 5.4 Q6 2 9.6 5.4 M4.1 7.2 Q6 5.6 7.9 7.2" stroke="#f0f0f0" stroke-width="1.1" fill="none"/><circle cx="6" cy="8.8" r="0.9" fill="#f0f0f0"/></svg>
  <svg class="abs" style="left:877.5px;top:9.5px" width="11" height="11" viewBox="0 0 11 11"><path d="M0.6 3.8 H2.8 L5.6 1.2 V9.8 L2.8 7.2 H0.6 Z" stroke="#f0f0f0" stroke-width="1" fill="none"/><path d="M7.2 3.6 Q8.2 5.5 7.2 7.4 M8.8 2.2 Q10.6 5.5 8.8 8.8" stroke="#f0f0f0" stroke-width="1" fill="none"/></svg>
  <svg class="abs" style="left:892.5px;top:9.5px" width="11" height="11" viewBox="0 0 11 11"><rect x="1" y="3.5" width="9" height="6" rx="1" fill="#e8e8e8"/><path d="M2 3.5 L4 0.8 M3.5 3.5 L5 1.2" stroke="#e8e8e8" stroke-width="1"/></svg>
  <div class="abs" style="left:905px;top:5.5px;width:43.5px;font-size:8.4px;letter-spacing:-.35px;color:#f0f0f0;line-height:10px;text-align:right">10:45 PM</div>
  <div class="abs" style="left:905px;top:15.5px;width:43.5px;font-size:8.4px;letter-spacing:-.3px;color:#f0f0f0;line-height:10px;text-align:right">7/21/2025</div>
</div>
<div id="botgray" class="abs"></div>
</body></html>
